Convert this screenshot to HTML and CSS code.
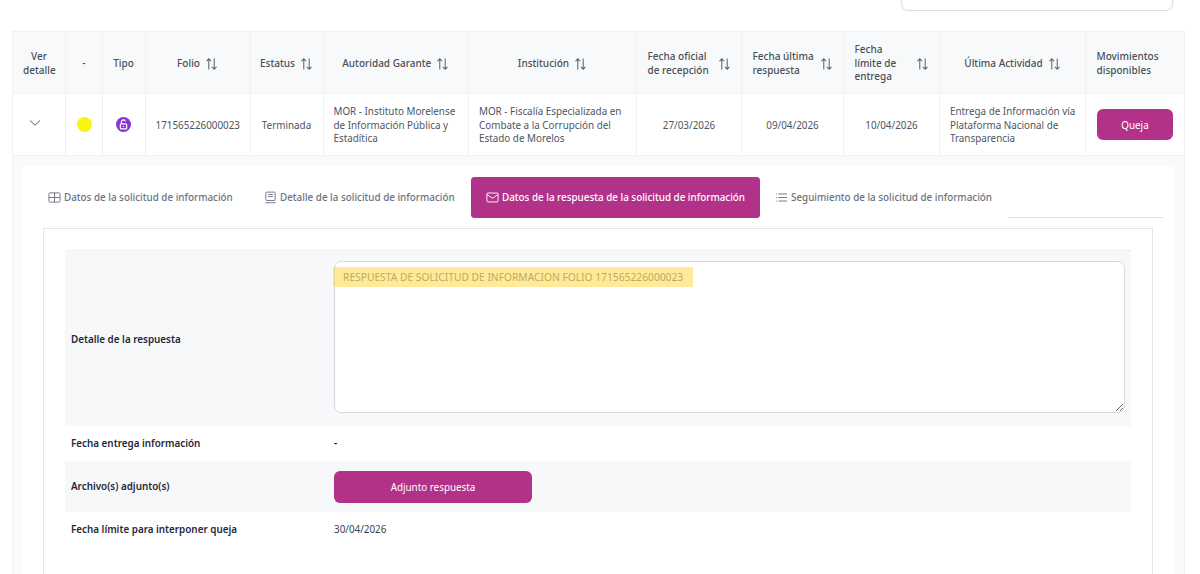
FILE: index.html
```html
<!DOCTYPE html>
<html lang="es">
<head>
<meta charset="utf-8">
<title>Solicitud de información</title>
<link rel="stylesheet" href="styles.css">
</head>
<body>
<div class="topbar"><div class="searchbox"></div></div>
<table class="grid">
  <colgroup>
    <col class="c1"><col class="c2"><col class="c3"><col class="c4"><col class="c5"><col class="c6"><col class="c7"><col class="c8"><col class="c9"><col class="c10"><col class="c11"><col class="c12">
  </colgroup>
  <thead>
    <tr>
      <th>Ver detalle</th>
      <th>-</th>
      <th>Tipo</th>
      <th><span class="sort center">Folio <svg class="arrows" viewBox="0 0 12 12"><path d="M3.5 11V1.2M1.4 3.3 3.5 1.2 5.6 3.3M8.5 1v9.8M6.4 8.7l2.1 2.1 2.1-2.1"/></svg></span></th>
      <th><span class="sort center">Estatus <svg class="arrows" viewBox="0 0 12 12"><path d="M3.5 11V1.2M1.4 3.3 3.5 1.2 5.6 3.3M8.5 1v9.8M6.4 8.7l2.1 2.1 2.1-2.1"/></svg></span></th>
      <th><span class="sort center">Autoridad Garante <svg class="arrows" viewBox="0 0 12 12"><path d="M3.5 11V1.2M1.4 3.3 3.5 1.2 5.6 3.3M8.5 1v9.8M6.4 8.7l2.1 2.1 2.1-2.1"/></svg></span></th>
      <th><span class="sort center">Institución <svg class="arrows" viewBox="0 0 12 12"><path d="M3.5 11V1.2M1.4 3.3 3.5 1.2 5.6 3.3M8.5 1v9.8M6.4 8.7l2.1 2.1 2.1-2.1"/></svg></span></th>
      <th class="pad"><span class="sort"><span class="lbl">Fecha oficial de recepción</span><svg class="arrows" viewBox="0 0 12 12"><path d="M3.5 11V1.2M1.4 3.3 3.5 1.2 5.6 3.3M8.5 1v9.8M6.4 8.7l2.1 2.1 2.1-2.1"/></svg></span></th>
      <th class="pad"><span class="sort"><span class="lbl">Fecha última respuesta</span><svg class="arrows" viewBox="0 0 12 12"><path d="M3.5 11V1.2M1.4 3.3 3.5 1.2 5.6 3.3M8.5 1v9.8M6.4 8.7l2.1 2.1 2.1-2.1"/></svg></span></th>
      <th class="pad"><span class="sort"><span class="lbl narrow">Fecha límite de entrega</span><svg class="arrows" viewBox="0 0 12 12"><path d="M3.5 11V1.2M1.4 3.3 3.5 1.2 5.6 3.3M8.5 1v9.8M6.4 8.7l2.1 2.1 2.1-2.1"/></svg></span></th>
      <th><span class="sort center">Última Actividad <svg class="arrows" viewBox="0 0 12 12"><path d="M3.5 11V1.2M1.4 3.3 3.5 1.2 5.6 3.3M8.5 1v9.8M6.4 8.7l2.1 2.1 2.1-2.1"/></svg></span></th>
      <th class="pad left">Movimientos disponibles</th>
    </tr>
  </thead>
  <tbody>
    <tr class="datarow">
      <td class="chev"><svg viewBox="0 0 12 12"><path d="M1 3.5 6 8.2 11 3.5"/></svg></td>
      <td class="dotcell"><span class="dot"></span></td>
      <td><span class="type"><svg viewBox="0 0 16 16"><rect x="4.6" y="7.4" width="6.8" height="5.2" rx="1"/><path d="M5.8 7.4V5.2a2.2 2.2 0 0 1 4.3-.6"/><path d="M8 9.4v1.2"/></svg></span></td>
      <td>171565226000023</td>
      <td>Terminada</td>
      <td class="left">MOR - Instituto Morelense de Información Pública y Estadítica</td>
      <td class="left">MOR - Fiscalía Especializada en Combate a la Corrupción del Estado de Morelos</td>
      <td>27/03/2026</td>
      <td>09/04/2026</td>
      <td>10/04/2026</td>
      <td class="left wide">Entrega de Información vía Plataforma Nacional de Transparencia</td>
      <td class="action"><button class="btn queja">Queja</button></td>
    </tr>
    <tr>
      <td colspan="12" class="detail">
        <div class="panel">
          <div class="tabs">
            <a class="tab t1"><svg class="ico" viewBox="0 0 14 14"><rect x="1" y="2" width="12" height="10" rx="1.5"/><path d="M1 7h12M7 2v10"/></svg>Datos de la solicitud de información</a>
            <a class="tab t2"><svg class="ico" viewBox="0 0 14 14"><rect x="2" y="1.2" width="10" height="9" rx="0.8"/><path d="M1.5 12.6h11M4.5 3.8h5M4.5 6h5"/></svg>Detalle de la solicitud de información</a>
            <a class="tab active"><svg class="ico" viewBox="0 0 14 14"><rect x="1" y="2.2" width="12" height="9.6" rx="1.2"/><path d="M1 3.8 7 7.8 13 3.8"/></svg>Datos de la respuesta de la solicitud de información</a>
            <a class="tab t4"><svg class="ico" viewBox="0 0 14 14"><path d="M3.6 3.2H13M3.6 7H13M3.6 10.8H13M1 3.2h1M1 7h1M1 10.8h1"/></svg>Seguimiento de la solicitud de información</a>
            <div class="tabline"></div>
          </div>
          <div class="card">
            <div class="rows">
              <div class="row r1 shade">
                <div class="k">Detalle de la respuesta</div>
                <div class="v areawrap">
                  <textarea class="area" readonly>RESPUESTA DE SOLICITUD DE INFORMACION FOLIO 171565226000023</textarea>
                  <span class="mark"></span>
                </div>
              </div>
              <div class="row r2"><div class="k">Fecha entrega información</div><div class="v strong">-</div></div>
              <div class="row r3 shade"><div class="k">Archivo(s) adjunto(s)</div><div class="v"><button class="btn adj">Adjunto respuesta</button></div></div>
              <div class="row r4"><div class="k">Fecha límite para interponer queja</div><div class="v">30/04/2026</div></div>
            </div>
          </div>
        </div>
      </td>
    </tr>
  </tbody>
</table>
</body>
</html>
```

FILE: styles.css
```css
* { box-sizing: border-box; }
html, body { margin: 0; height: 574px; overflow: hidden; background: #fff; }
body { font-family: "Noto Sans", "Open Sans", sans-serif; font-size: 9.85px; color: #495057; }

.topbar { height: 32px; margin-bottom: -1px; padding-right: 27px; display: flex; justify-content: flex-end; align-items: flex-start; }
.searchbox { width: 272px; height: 11px; background: #fff; border: 1px solid #dcdde3; border-top: 0; border-radius: 0 0 7px 7px; }

.grid { width: 1172px; margin-left: 12px; table-layout: fixed; border-collapse: collapse; border: 1px solid #eff1f3; }
.c1 { width: 53px; } .c2 { width: 36.5px; } .c3 { width: 43px; } .c4 { width: 105px; }
.c5 { width: 73px; } .c6 { width: 145.5px; } .c7 { width: 168px; } .c8 { width: 105px; }
.c9 { width: 102px; } .c10 { width: 96px; } .c11 { width: 146px; } .c12 { width: 99px; }

th, td { border: 1px solid #eff1f3; text-align: center; vertical-align: middle; font-size: 9.85px; line-height: 13.6px; }
th { height: 62px; background: #f8f9fb; font-size: 10px; font-weight: 500; color: #495057; padding: 2px 10px 0; }
thead th.pad { padding: 2px 10.5px 0; }
td { height: 62px; padding: 2px 10px 0; color: #4b5563; }
td.wide { padding: 2px 8px 0 10px; }
td.dotcell { padding: 0 9px 0 11px; }
.left { text-align: left; }

.sort { display: flex; align-items: center; justify-content: space-between; text-align: left; }
.sort.center { justify-content: center; gap: 5px; white-space: nowrap; }
.lbl { display: block; max-width: 68px; }
.lbl.narrow { max-width: 44px; }
.arrows { width: 13px; height: 14px; flex: none; fill: none; stroke: #5a6570; stroke-width: 0.95; }

.chev { text-align: left; }
td.chev { padding: 0 0 0 15.5px; }
.chev svg { display: block; width: 12px; height: 12px; fill: none; stroke: #55606c; stroke-width: 1; margin-top: -3px; }
.dot { display: block; width: 15px; height: 15px; margin: -1px auto 0; border-radius: 50%; background: #f5f50f; }
.type { display: block; width: 15px; height: 15px; margin: -3px auto 0; border-radius: 50%; background: #8a33d6; }
.type svg { display: block; width: 15px; height: 15px; fill: none; stroke: #fff; stroke-width: 1.25; }

.btn { display: block; border: 0; color: #fff; background: #b2328a; font-family: inherit; font-size: 9.85px; }
td.action { padding: 0 11px; }
.queja { width: 76px; height: 31px; border-radius: 6px; }

td.detail { height: auto; padding: 10px 10px 0 9px; background: #fafafb; text-align: left; }
.panel { background: #fff; padding: 11px 21px 0 21px; height: 420px; }
.tabs { display: flex; align-items: flex-end; height: 41px; padding-left: 5px; margin-right: -10px; }
.tab { display: flex; align-items: center; height: 41px; color: #6b7280; font-weight: 500; white-space: nowrap; }
.ico { width: 13px; height: 13px; margin-right: 3px; flex: none; fill: none; stroke: currentColor; stroke-width: 1; }
.t1 { width: 216px; }
.t2 { width: 207px; }
.active { width: 289px; padding-left: 14px; color: #fff; background: #b2328a; border: 1px solid #bf2a8c; border-radius: 3px; }
.t4 { width: 248px; padding-left: 15px; }
.tabline { flex: 1; height: 1px; background: #dee2e6; }

.card { margin-top: 10px; height: 360px; border: 1px solid #e3e5e8; border-bottom: 0; padding: 21px 21px 0; }
.rows { border-top: 1px solid #eceef1; }
.row { display: flex; align-items: center; padding-left: 6px; }
.shade { background: #f7f8fa; }
.r1 { height: 175px; }
.r1 .k { padding-top: 2px; }
.r2 { height: 35px; }
.r3 { height: 51px; }
.r4 { height: 35px; }
.k { width: 263px; font-weight: 600; color: #1f2937; flex: none; }
.v { color: #374151; }
.v.strong { color: #111; font-weight: 600; }
.areawrap { position: relative; }
.area { display: block; width: 791px; height: 152px; border: 1px solid #d6d8de; border-radius: 7px; padding: 8px 8px; font-family: inherit; font-size: 10.25px; line-height: 14px; color: #6b7280; background: #fff; outline: none; resize: both; margin-top: -3px; }
.mark { position: absolute; left: -1px; top: 3px; width: 360px; height: 20px; background: rgba(255, 216, 70, 0.55); }
.adj { width: 198px; height: 32px; border-radius: 6px; }
```
